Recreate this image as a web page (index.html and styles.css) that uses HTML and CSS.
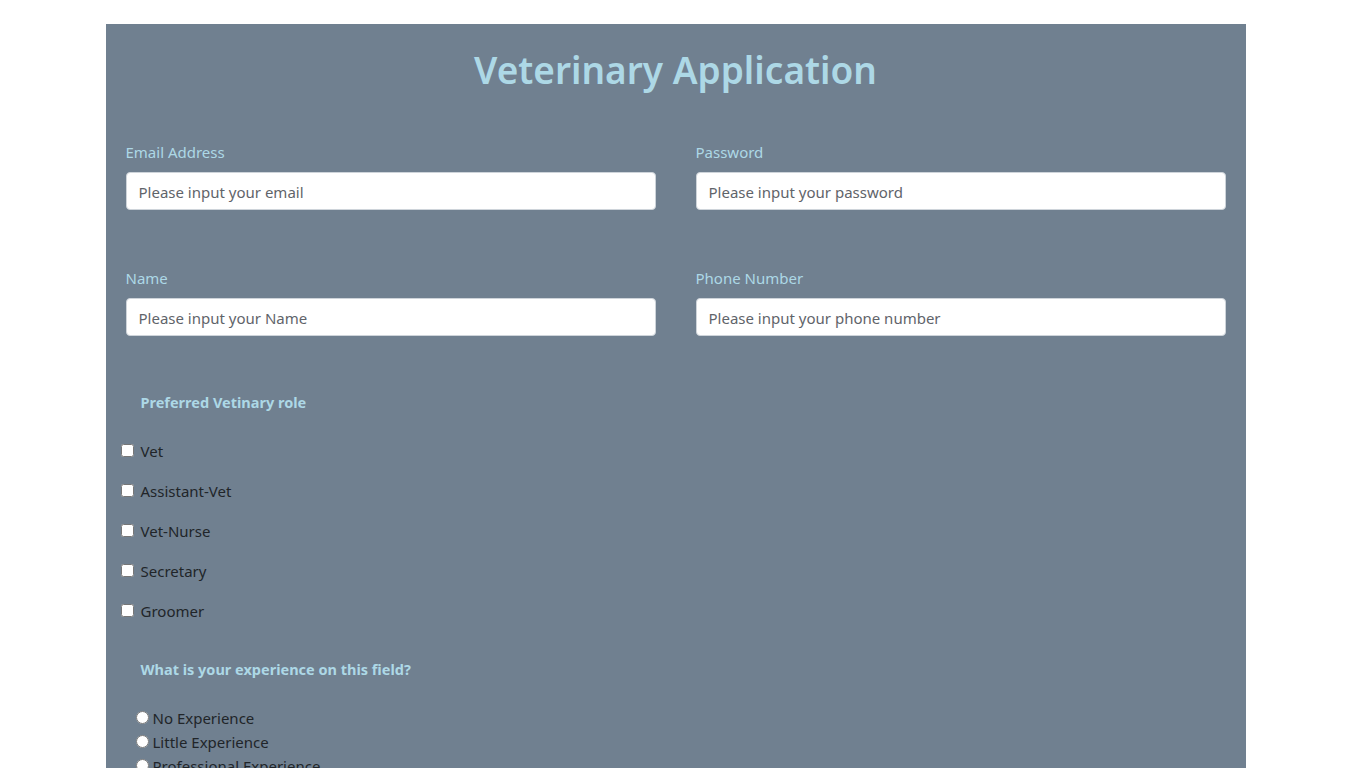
FILE: index.html
```html
<!DOCTYPE html>
<html lang="en">
<head>
<meta charset="utf-8">
<title>Veterinary Application</title>
<link rel="stylesheet" href="styles.css">
</head>
<body>
<main class="container">
  <h1 class="title">Veterinary Application</h1>
  <form class="form">
    <div class="row">
      <div class="field">
        <label class="label" for="email">Email Address</label>
        <input class="input" id="email" type="email" placeholder="Please input your email">
      </div>
      <div class="field">
        <label class="label" for="password">Password</label>
        <input class="input" id="password" type="password" placeholder="Please input your password">
      </div>
    </div>
    <div class="row">
      <div class="field">
        <label class="label" for="name">Name</label>
        <input class="input" id="name" type="text" placeholder="Please input your Name">
      </div>
      <div class="field">
        <label class="label" for="phone">Phone Number</label>
        <input class="input" id="phone" type="tel" placeholder="Please input your phone number">
      </div>
    </div>

    <fieldset class="group">
      <legend class="group-title">Preferred Vetinary role</legend>
      <div class="checks">
        <label class="check"><input type="checkbox" class="box"><span>Vet</span></label>
        <label class="check"><input type="checkbox" class="box"><span>Assistant-Vet</span></label>
        <label class="check"><input type="checkbox" class="box"><span>Vet-Nurse</span></label>
        <label class="check"><input type="checkbox" class="box"><span>Secretary</span></label>
        <label class="check"><input type="checkbox" class="box"><span>Groomer</span></label>
      </div>
    </fieldset>

    <fieldset class="group">
      <legend class="group-title">What is your experience on this field?</legend>
      <div class="radios">
        <label class="radio"><input type="radio" name="exp" class="dot"><span>No Experience</span></label>
        <label class="radio"><input type="radio" name="exp" class="dot"><span>Little Experience</span></label>
        <label class="radio"><input type="radio" name="exp" class="dot"><span>Professional Experience</span></label>
      </div>
    </fieldset>
  </form>
</main>
</body>
</html>
```

FILE: styles.css
```css
* { box-sizing: border-box; }

html, body {
  margin: 0;
  padding: 0;
  background: #ffffff;
}

body {
  /* room of the reference's 15px vertical scrollbar */
  padding-right: 15px;
  font-family: "Noto Sans", "Open Sans", sans-serif;
  font-size: 16px;
  line-height: 1.5;
  color: #212529;
}

.container {
  width: 1140px;
  margin: 24px auto 0;
  background: #708090;
  padding: 22px 20px 1460px;
}

.title {
  margin: 0;
  text-align: center;
  font-size: 37px;
  font-weight: 600;
  line-height: 48px;
  color: #add8e6;
}

.form {
  margin-top: 46px;
}

.row {
  display: grid;
  grid-template-columns: 1fr 1fr;
  column-gap: 40px;
  margin-bottom: 56px;
}

.field {
  display: flex;
  flex-direction: column;
}

.label {
  color: #add8e6;
  font-size: 15px;
  line-height: 24px;
  margin-bottom: 8px;
}

.input {
  height: 38px;
  padding: 7px 12px 5px;
  border: 1px solid #ced4da;
  border-radius: 4px;
  background: #fff;
  font-family: inherit;
  font-size: 15px;
  color: #495057;
}

.input::placeholder {
  color: #5f646a;
  opacity: 1;
}

.group {
  border: 0;
  margin: -2px 0 0;
  padding: 0;
}

.group-title {
  padding: 0;
  margin-left: 15px;
  font-size: 14.5px;
  font-weight: 700;
  line-height: 24px;
  color: #add8e6;
}

.checks {
  display: flex;
  flex-direction: column;
  gap: 16px;
  margin: 25px 0 0 -5px;
}

.check {
  display: flex;
  align-items: center;
  height: 24px;
  font-size: 15px;
}

.box {
  width: 13px;
  height: 13px;
  margin: 0 7px 2px 0;
}

.group + .group {
  margin-top: 34px;
}

.radios {
  display: flex;
  flex-direction: column;
  margin: 25px 0 0 10px;
}

.radio {
  display: flex;
  align-items: center;
  height: 24px;
  font-size: 15px;
}

.dot {
  width: 13px;
  height: 13px;
  margin: 0 4px 2px 0;
}
```
